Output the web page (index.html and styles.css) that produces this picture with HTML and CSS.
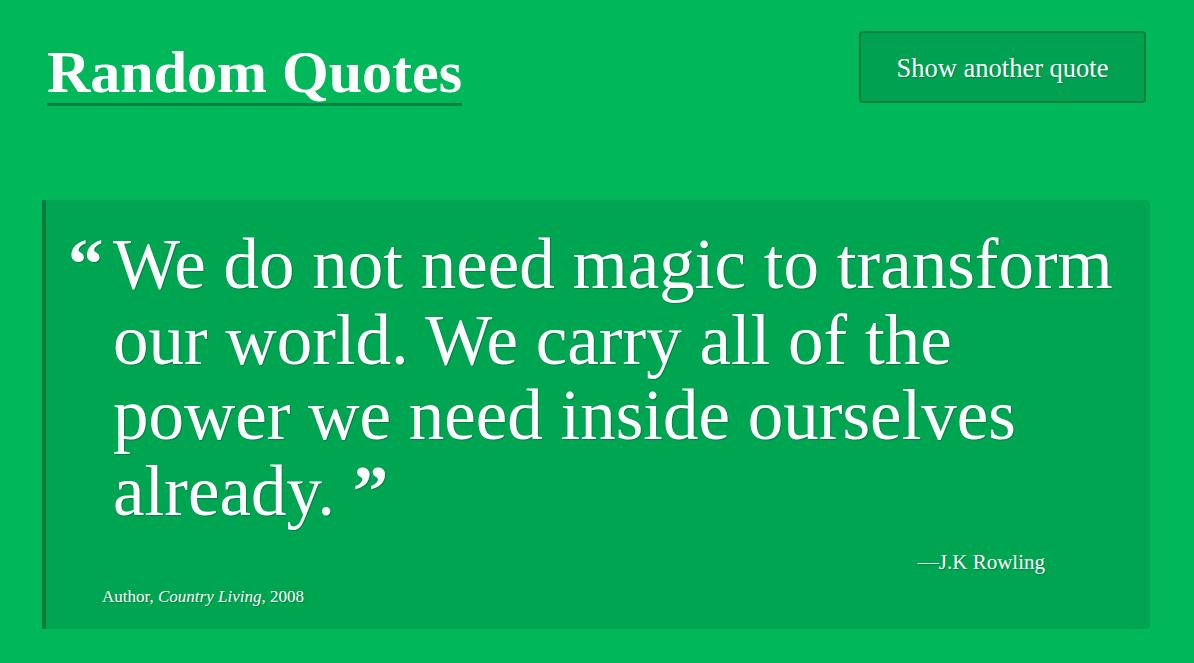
FILE: index.html
```html
<!DOCTYPE html>
<html lang="en">
<head>
<meta charset="utf-8">
<title>Random Quotes</title>
<link rel="stylesheet" href="styles.css">
</head>
<body>
  <div class="page">
    <header class="header">
      <h1 class="title"><a class="title-link" href="#">Random Quotes</a></h1>
      <button class="btn" type="button">Show another quote</button>
    </header>
    <main class="card">
      <div class="quote">
        <span class="mark">&ldquo;</span>
        <p class="quote-text">We do not need magic to transform our world. We carry all of the power we need inside ourselves already.&nbsp;<b class="mark-close">&rdquo;</b></p>
      </div>
      <div class="author">&mdash;J.K Rowling</div>
      <div class="source">Author, <em>Country Living</em>, 2008</div>
    </main>
  </div>
</body>
</html>
```

FILE: styles.css
```css
html, body {
  margin: 0;
  padding: 0;
}

body {
  background: #00b85a;
  color: #ffffff;
  font-family: "Liberation Serif", "Times New Roman", serif;
  height: 663px;
  overflow: hidden;
}

.page {
  padding: 31px 44px 0 42px;
}

.header {
  display: flex;
  justify-content: space-between;
  align-items: flex-start;
  padding: 0 4px 0 5px;
}

.title {
  margin: 10px 0 0 0;
  font-size: 60px;
  line-height: 62px;
  font-weight: 700;
}

.title-link {
  display: inline-block;
  color: #ffffff;
  text-decoration: none;
  border-bottom: 3px solid #0a8240;
}

.btn {
  box-sizing: border-box;
  height: 72px;
  width: 287px;
  padding: 2px 0 0 0;
  background: #00a252;
  color: #ffffff;
  border: 2px solid #0a7f3f;
  border-radius: 4px;
  font-family: "Liberation Serif", "Times New Roman", serif;
  font-size: 26.5px;
  text-shadow: 1px 1px 1px rgba(0, 0, 0, 0.2);
  cursor: pointer;
}

.card {
  display: flex;
  flex-direction: column;
  margin-top: 94px;
  height: 429px;
  box-sizing: border-box;
  background: #00a552;
  border-left: 4px solid #0a7a3d;
  border-radius: 0 4px 4px 0;
  padding: 27px 30px 0 22px;
  text-shadow: 1px 1px 1px rgba(0, 0, 0, 0.22);
}

.quote {
  display: flex;
  align-items: flex-start;
}

.mark {
  flex: none;
  width: 45px;
  font-size: 71px;
  line-height: 75.5px;
  font-weight: 700;
}

.quote-text {
  margin: 0;
  font-size: 71px;
  line-height: 75.5px;
}

.mark-close {
  display: inline-block;
  font-weight: 700;
  line-height: 60px;
}

.author {
  align-self: flex-end;
  margin: 20px 75px 0 0;
  font-size: 21px;
  line-height: 26px;
}

.source {
  margin: 11px 0 0 34px;
  font-size: 17px;
  line-height: 22px;
}
```
